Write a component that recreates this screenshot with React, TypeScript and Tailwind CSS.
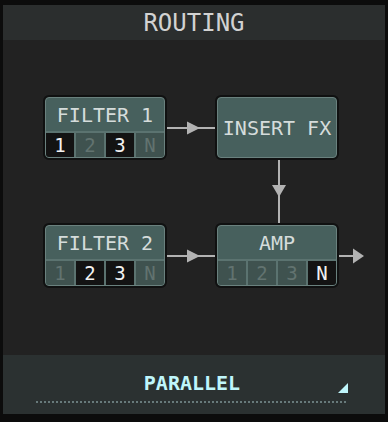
const mono = { fontFamily: '"DejaVu Sans Mono", "Liberation Mono", monospace' };

type Slot = '1' | '2' | '3' | 'N';
const SLOTS: Slot[] = ['1', '2', '3', 'N'];

function ModuleBox({ title, active }: { title: string; active?: Slot[] }) {
  return (
    <div className="h-[65px] w-[124px] rounded-[6px] border-2 border-[#101111] bg-[#101111]">
      <div className="flex h-full flex-col overflow-hidden rounded-[4px] border border-[#6a817e] bg-[#47605d]">
        <div className="flex flex-1 items-center justify-center pt-[1px] text-[20px] leading-none text-[#d5dcdb]">
          {title}
        </div>
        {active && (
          <div className="grid h-[26px] grid-cols-4 gap-[2px] bg-[#5b7370] pt-[2px]">
            {SLOTS.map((s) => {
              const on = active.includes(s);
              return (
                <div
                  key={s}
                  className={
                    on
                      ? 'flex items-center justify-center bg-[#131313] text-[19px] leading-none text-[#f2f2f2]'
                      : 'flex items-center justify-center bg-[#3f524f] text-[19px] leading-none text-[#627370]'
                  }
                >
                  {s}
                </div>
              );
            })}
          </div>
        )}
      </div>
    </div>
  );
}

function ArrowRight() {
  return (
    <svg width="48" height="14" viewBox="0 0 48 14">
      <rect x="0" y="6" width="48" height="2" fill="#b3b3b3" />
      <polygon points="20,0.5 33,7 20,13.5" fill="#b3b3b3" />
    </svg>
  );
}

function ArrowOut() {
  return (
    <svg width="28" height="16" viewBox="0 0 28 16">
      <rect x="0" y="7" width="15" height="2" fill="#b3b3b3" />
      <polygon points="14,0.5 25,8 14,15.5" fill="#b3b3b3" />
    </svg>
  );
}

function ArrowDown() {
  return (
    <svg width="124" height="63" viewBox="0 0 124 63">
      <rect x="63" y="0" width="2" height="63" fill="#b3b3b3" />
      <polygon points="57,25 71,25 64,37" fill="#b3b3b3" />
    </svg>
  );
}

export default function App() {
  return (
    <div className="flex h-[422px] w-[388px] flex-col bg-[#0c0c0c] px-[3px] pb-[8px] pt-[5px]" style={mono}>
      <div className="flex h-[35px] items-center justify-center bg-[#2b2e2e] text-[24px] leading-none text-[#d2d2d2]">
        ROUTING
      </div>

      <div className="flex-1 bg-[#222222] pl-[40px] pt-[55px]">
        <div className="grid grid-cols-[124px_48px_124px_28px] grid-rows-[65px_63px_65px]">
          <ModuleBox title="FILTER 1" active={['1', '3']} />
          <div className="flex items-center">
            <ArrowRight />
          </div>
          <ModuleBox title="INSERT FX" />
          <div />

          <div />
          <div />
          <ArrowDown />
          <div />

          <ModuleBox title="FILTER 2" active={['2', '3']} />
          <div className="flex items-center">
            <ArrowRight />
          </div>
          <ModuleBox title="AMP" active={['N']} />
          <div className="flex items-center">
            <ArrowOut />
          </div>
        </div>
      </div>

      <div className="flex h-[59px] flex-col bg-[#2b3131] px-[33px] pt-[16px]">
        <div className="grid h-[24px] w-[312px] grid-cols-[1fr_auto_1fr] items-center">
          <div />
          <div className="text-[20px] font-bold leading-none text-[#bff6fb]">PARALLEL</div>
          <div className="flex h-full items-end justify-end pb-[2px]">
            <svg width="10" height="10" viewBox="0 0 10 10">
              <polygon points="10,0 10,10 0,10" fill="#bff6fb" />
            </svg>
          </div>
        </div>
        <div className="mt-[6px] h-[2px] w-[312px] bg-[repeating-linear-gradient(90deg,#687a7b_0_2px,transparent_2px_4px)]" />
      </div>
    </div>
  );
}
